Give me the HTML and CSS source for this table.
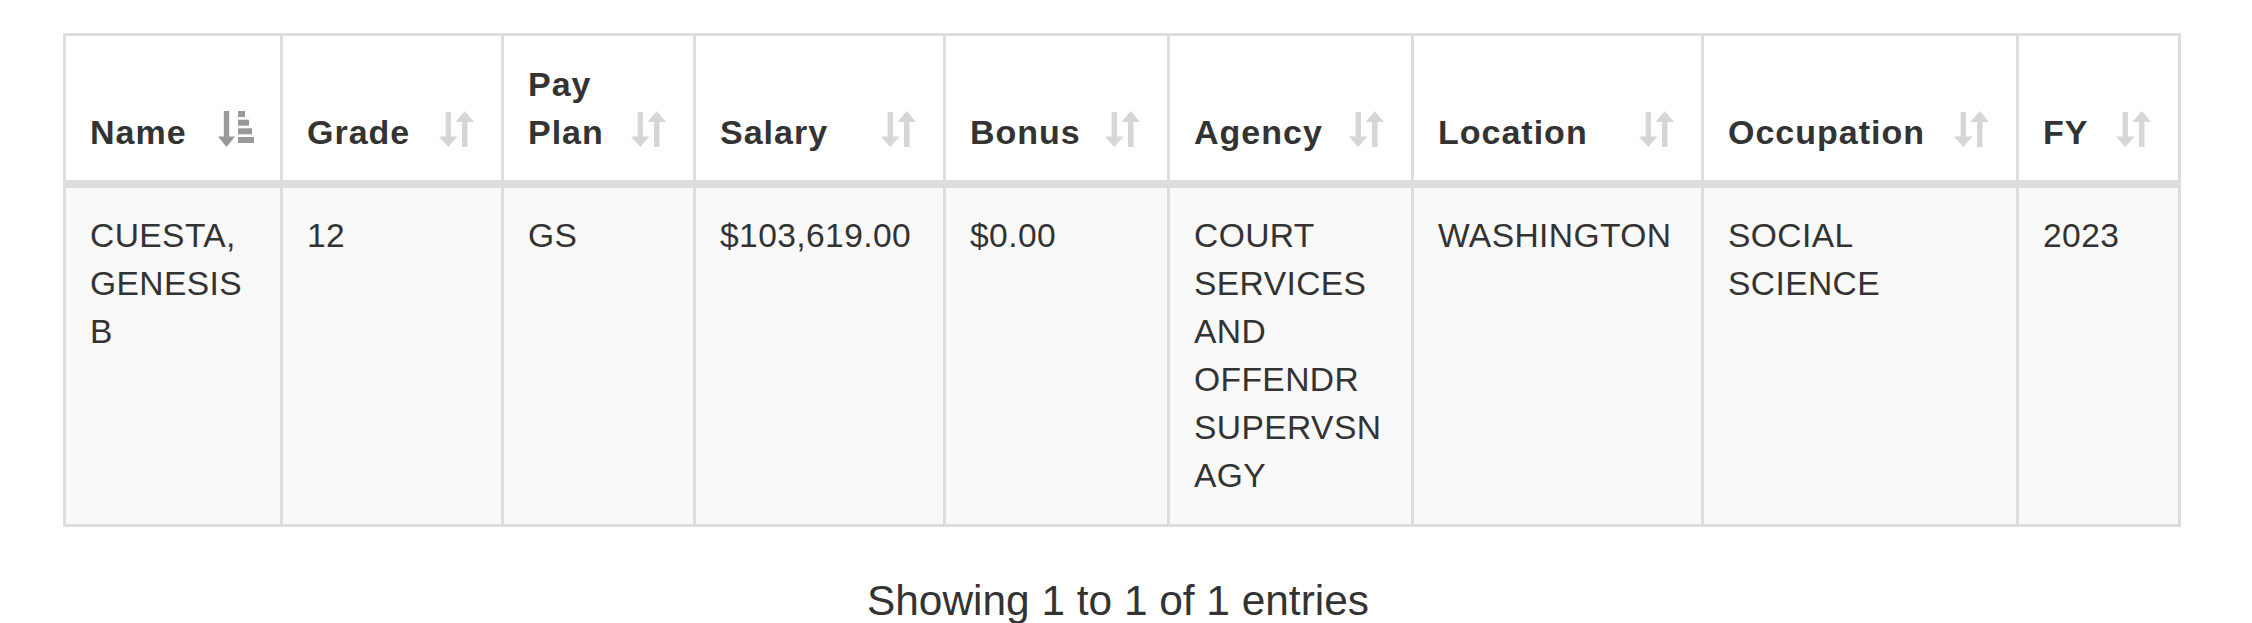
FILE: index.html
```html
<!DOCTYPE html>
<html lang="en">
<head>
<meta charset="utf-8">
<title>Employees</title>
<link rel="stylesheet" href="styles.css">
</head>
<body>
<div class="wrap">
  <table class="grid">
    <thead>
      <tr>
        <th class="col-name">Name<svg class="sort-icon sort-icon-active" viewBox="0 0 36 36" width="36" height="36"><rect x="5.8" y="0" width="5.4" height="26"/><polygon points="0,25.5 17,25.5 8.5,36"/><rect x="20" y="0" width="7" height="6"/><rect x="20" y="8.7" width="11" height="6"/><rect x="20" y="17.3" width="14" height="6"/><rect x="20" y="26" width="16" height="6"/></svg></th>
        <th class="col-grade">Grade<svg class="sort-icon" viewBox="0 0 35 36" width="35" height="36"><rect x="6.6" y="1" width="5.4" height="25"/><polygon points="0,25.5 18.5,25.5 9.25,36"/><polygon points="16.5,11 35,11 25.75,0"/><rect x="23" y="10.5" width="5.5" height="25.5"/></svg></th>
        <th class="col-plan">Pay Plan<svg class="sort-icon" viewBox="0 0 35 36" width="35" height="36"><rect x="6.6" y="1" width="5.4" height="25"/><polygon points="0,25.5 18.5,25.5 9.25,36"/><polygon points="16.5,11 35,11 25.75,0"/><rect x="23" y="10.5" width="5.5" height="25.5"/></svg></th>
        <th class="col-salary">Salary<svg class="sort-icon" viewBox="0 0 35 36" width="35" height="36"><rect x="6.6" y="1" width="5.4" height="25"/><polygon points="0,25.5 18.5,25.5 9.25,36"/><polygon points="16.5,11 35,11 25.75,0"/><rect x="23" y="10.5" width="5.5" height="25.5"/></svg></th>
        <th class="col-bonus">Bonus<svg class="sort-icon" viewBox="0 0 35 36" width="35" height="36"><rect x="6.6" y="1" width="5.4" height="25"/><polygon points="0,25.5 18.5,25.5 9.25,36"/><polygon points="16.5,11 35,11 25.75,0"/><rect x="23" y="10.5" width="5.5" height="25.5"/></svg></th>
        <th class="col-agency">Agency<svg class="sort-icon" viewBox="0 0 35 36" width="35" height="36"><rect x="6.6" y="1" width="5.4" height="25"/><polygon points="0,25.5 18.5,25.5 9.25,36"/><polygon points="16.5,11 35,11 25.75,0"/><rect x="23" y="10.5" width="5.5" height="25.5"/></svg></th>
        <th class="col-location">Location<svg class="sort-icon" viewBox="0 0 35 36" width="35" height="36"><rect x="6.6" y="1" width="5.4" height="25"/><polygon points="0,25.5 18.5,25.5 9.25,36"/><polygon points="16.5,11 35,11 25.75,0"/><rect x="23" y="10.5" width="5.5" height="25.5"/></svg></th>
        <th class="col-occupation">Occupation<svg class="sort-icon" viewBox="0 0 35 36" width="35" height="36"><rect x="6.6" y="1" width="5.4" height="25"/><polygon points="0,25.5 18.5,25.5 9.25,36"/><polygon points="16.5,11 35,11 25.75,0"/><rect x="23" y="10.5" width="5.5" height="25.5"/></svg></th>
        <th class="col-fy">FY<svg class="sort-icon" viewBox="0 0 35 36" width="35" height="36"><rect x="6.6" y="1" width="5.4" height="25"/><polygon points="0,25.5 18.5,25.5 9.25,36"/><polygon points="16.5,11 35,11 25.75,0"/><rect x="23" y="10.5" width="5.5" height="25.5"/></svg></th>
      </tr>
    </thead>
    <tbody>
      <tr class="row-odd">
        <td>CUESTA, GENESIS B</td>
        <td>12</td>
        <td>GS</td>
        <td>$103,619.00</td>
        <td>$0.00</td>
        <td>COURT SERVICES AND OFFENDR SUPERVSN AGY</td>
        <td>WASHINGTON</td>
        <td>SOCIAL SCIENCE</td>
        <td>2023</td>
      </tr>
    </tbody>
  </table>
  <div class="info">Showing 1 to 1 of 1 entries</div>
</div>
</body>
</html>
```

FILE: styles.css
```css
html, body {
  margin: 0;
  padding: 0;
  background: #ffffff;
}

body {
  font-family: "Liberation Sans", Arial, Helvetica, sans-serif;
  color: #333333;
}

.wrap {
  padding: 33px 0 0 63px;
  width: 2118px;
}

.grid {
  box-sizing: border-box;
  width: 2118px;
  table-layout: fixed;
  border-collapse: separate;
  border-spacing: 0;
  border-top: 3px solid #dddddd;
  border-right: 3px solid #dddddd;
}

.grid th {
  box-sizing: border-box;
  position: relative;
  padding: 24px 72px 24px 24px;
  border-left: 3px solid #dddddd;
  border-bottom: 8px solid #dddddd;
  background: #ffffff;
  text-align: left;
  vertical-align: bottom;
  font-weight: bold;
  font-size: 34px;
  line-height: 48px;
  letter-spacing: 1px;
}

.grid td {
  padding: 24px;
  border-left: 3px solid #dddddd;
  border-bottom: 3px solid #dddddd;
  vertical-align: top;
  font-size: 33.6px;
  line-height: 48px;
  letter-spacing: 0.4px;
}

.row-odd td {
  background: #f9f9f9;
}

.col-name { width: 217px; }
.col-grade { width: 221px; }
.col-plan { width: 192px; }
.col-salary { width: 250px; }
.col-bonus { width: 224px; }
.col-agency { width: 244px; }
.col-location { width: 290px; }
.col-occupation { width: 315px; }
.col-fy { width: 162px; }

.sort-icon {
  position: absolute;
  right: 27px;
  bottom: 33px;
  fill: #d6d6d6;
}

.sort-icon-active {
  right: 26px;
  fill: #999999;
}

.info {
  margin-top: 50px;
  padding-right: 8px;
  text-align: center;
  font-size: 42.4px;
  line-height: 48px;
  color: #333333;
}
```
